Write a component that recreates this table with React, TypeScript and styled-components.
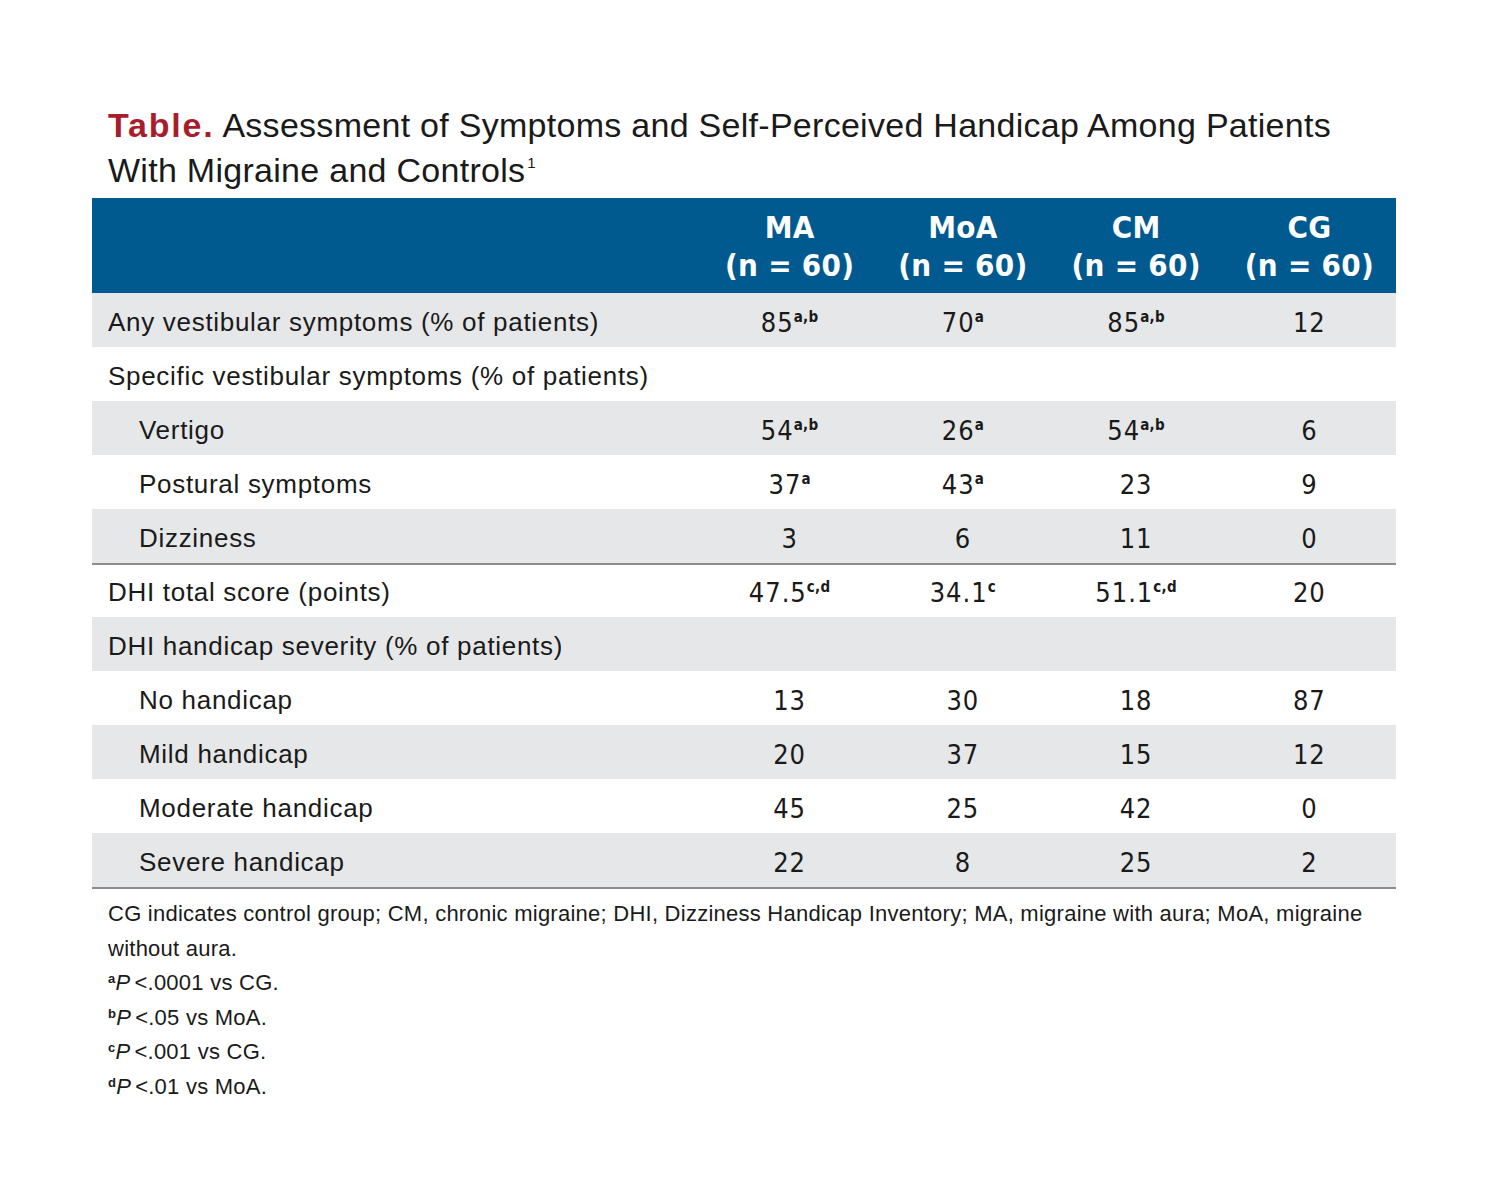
import React from 'react';
import styled, { createGlobalStyle } from 'styled-components';

const GlobalStyle = createGlobalStyle`
  body {
    margin: 0;
    background: #ffffff;
    font-family: "Liberation Sans", Arial, sans-serif;
    color: #1a1a1a;
  }
`;

const Page = styled.div`
  width: 1488px;
  height: 1200px;
  padding: 103px 92px 0 92px;
  box-sizing: border-box;
`;

const Title = styled.h1`
  margin: 0 0 5px 16px;
  font-weight: normal;
  font-size: 34px;
  line-height: 45px;
  color: #1a1a1a;
  letter-spacing: 0.28px;

  strong {
    color: #a81d2c;
    font-weight: bold;
    letter-spacing: 1.8px;
  }
  sup {
    font-size: 15px;
    vertical-align: 14px;
    line-height: 0;
    margin-left: 2px;
  }
`;

const Table = styled.div`
  width: 1304px;
  border-bottom: 2px solid #8c8c8c;
`;

const HeadRow = styled.div`
  display: grid;
  grid-template-columns: 611px repeat(4, 1fr);
  height: 95px;
  background: #005a8f;
  align-items: center;
`;

const HeadCell = styled.div`
  color: #ffffff;
  text-align: center;
  font-family: "DejaVu Sans Condensed", "Liberation Sans", sans-serif;
  font-weight: bold;
  font-size: 31px;
  line-height: 38px;
  letter-spacing: 0.3px;
`;

const Row = styled.div<{ $shade?: boolean; $rule?: boolean }>`
  display: grid;
  grid-template-columns: 611px repeat(4, 1fr);
  box-sizing: border-box;
  height: 54px;
  padding-top: ${(p) => (p.$rule ? 3 : 5)}px;
  align-items: center;
  background: ${(p) => (p.$shade ? '#e6e7e8' : '#ffffff')};
  border-top: ${(p) => (p.$rule ? '2px solid #8c8c8c' : 'none')};
`;

const Label = styled.div<{ $indent?: boolean }>`
  padding-left: ${(p) => (p.$indent ? 47 : 16)}px;
  font-size: 26px;
  letter-spacing: 0.7px;
  color: #1a1a1a;
`;

const Value = styled.div`
  text-align: center;
  font-family: "DejaVu Sans Condensed", "Liberation Sans", sans-serif;
  font-size: 27px;
  letter-spacing: 1px;
  color: #1a1a1a;

  sup {
    font-size: 15px;
    font-weight: bold;
    vertical-align: 10px;
    line-height: 0;
    letter-spacing: 0.3px;
  }
`;

const Notes = styled.div`
  padding: 8px 0 0 16px;
  font-size: 22px;
  line-height: 34.6px;
  letter-spacing: 0.25px;
  color: #1a1a1a;

  p {
    margin: 0;
  }
  sup {
    font-size: 13px;
    font-weight: bold;
    vertical-align: 7px;
    line-height: 0;
  }
  i {
    margin-right: 4px;
  }
`;

type Cell = [string, string?];

interface RowData {
  label: string;
  indent?: boolean;
  shade?: boolean;
  rule?: boolean;
  values?: Cell[];
}

const rows: RowData[] = [
  { label: 'Any vestibular symptoms (% of patients)', shade: true, values: [['85', 'a,b'], ['70', 'a'], ['85', 'a,b'], ['12']] },
  { label: 'Specific vestibular symptoms (% of patients)' },
  { label: 'Vertigo', indent: true, shade: true, values: [['54', 'a,b'], ['26', 'a'], ['54', 'a,b'], ['6']] },
  { label: 'Postural symptoms', indent: true, values: [['37', 'a'], ['43', 'a'], ['23'], ['9']] },
  { label: 'Dizziness', indent: true, shade: true, values: [['3'], ['6'], ['11'], ['0']] },
  { label: 'DHI total score (points)', rule: true, values: [['47.5', 'c,d'], ['34.1', 'c'], ['51.1', 'c,d'], ['20']] },
  { label: 'DHI handicap severity (% of patients)', shade: true },
  { label: 'No handicap', indent: true, values: [['13'], ['30'], ['18'], ['87']] },
  { label: 'Mild handicap', indent: true, shade: true, values: [['20'], ['37'], ['15'], ['12']] },
  { label: 'Moderate handicap', indent: true, values: [['45'], ['25'], ['42'], ['0']] },
  { label: 'Severe handicap', indent: true, shade: true, values: [['22'], ['8'], ['25'], ['2']] },
];

const groups = ['MA', 'MoA', 'CM', 'CG'];

export default function App() {
  return (
    <Page>
      <GlobalStyle />
      <Title>
        <strong>Table.</strong> Assessment of Symptoms and Self-Perceived Handicap Among Patients
        <br />
        With Migraine and Controls<sup>1</sup>
      </Title>
      <Table>
        <HeadRow>
          <div />
          {groups.map((g) => (
            <HeadCell key={g}>
              {g}
              <br />
              (n = 60)
            </HeadCell>
          ))}
        </HeadRow>
        {rows.map((r) => (
          <Row key={r.label} $shade={r.shade} $rule={r.rule}>
            <Label $indent={r.indent}>{r.label}</Label>
            {(r.values || [[''], [''], [''], ['']]).map(([v, s], i) => (
              <Value key={i}>
                {v}
                {s && <sup>{s}</sup>}
              </Value>
            ))}
          </Row>
        ))}
      </Table>
      <Notes>
        <p>
          CG indicates control group; CM, chronic migraine; DHI, Dizziness Handicap Inventory; MA, migraine with aura; MoA, migraine
          <br />
          without aura.
        </p>
        <p><sup>a</sup><i>P</i>&lt;.0001 vs CG.</p>
        <p><sup>b</sup><i>P</i>&lt;.05 vs MoA.</p>
        <p><sup>c</sup><i>P</i>&lt;.001 vs CG.</p>
        <p><sup>d</sup><i>P</i>&lt;.01 vs MoA.</p>
      </Notes>
    </Page>
  );
}
